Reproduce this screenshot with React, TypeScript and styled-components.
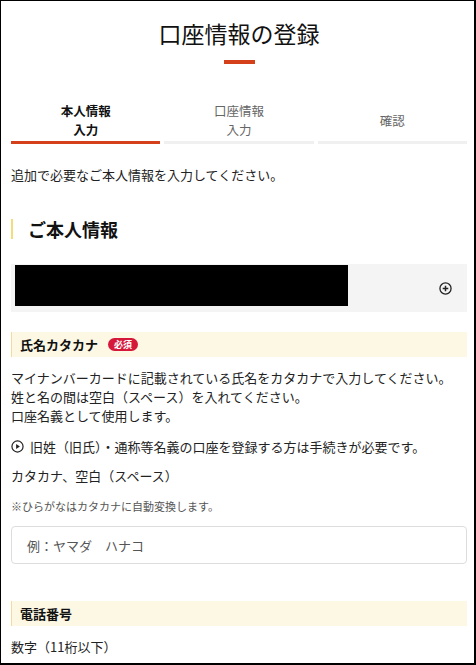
import React from 'react';
import styled, { createGlobalStyle } from 'styled-components';

const GlobalStyle = createGlobalStyle`
    html, body {
        margin: 0;
        padding: 0;
        background: #fff;
    }
    body {
        font-family: "Noto Sans CJK JP", "Noto Sans", sans-serif;
        color: #222;
    }
`;

const steps = [
    { label: ['本人情報', '入力'], active: true },
    { label: ['口座情報', '入力'], active: false },
    { label: ['確認'], active: false },
];

const PlayCircleIcon = () => (
    <svg width="13" height="13" viewBox="0 0 14 14">
        <circle cx="7" cy="7" r="6" fill="none" stroke="#222" strokeWidth="1.3" />
        <path d="M5.5 4.3 L9.6 7 L5.5 9.7 Z" fill="#222" />
    </svg>
);

const PlusCircleIcon = () => (
    <svg width="13" height="13" viewBox="0 0 14 14">
        <circle cx="7" cy="7" r="6" fill="none" stroke="#222" strokeWidth="1.4" />
        <path d="M7 4 V10 M4 7 H10" stroke="#222" strokeWidth="1.6" />
    </svg>
);

const App = () => {
    return (
        <>
            <GlobalStyle />
            <Frame>
                <Title>口座情報の登録</Title>
                <TitleBar />
                <Steps>
                    {steps.map((s) => (
                        <Step key={s.label.join('')} active={s.active}>
                            {s.label.map((l) => (
                                <span key={l}>{l}</span>
                            ))}
                        </Step>
                    ))}
                </Steps>
                <Lead>追加で必要なご本人情報を入力してください。</Lead>
                <SectionTitle>ご本人情報</SectionTitle>
                <InfoPanel>
                    <Redacted />
                    <PlusCircleIcon />
                </InfoPanel>

                <FieldHeader>
                    氏名カタカナ
                    <Required>必須</Required>
                </FieldHeader>
                <Text>
                    マイナンバーカードに記載されている氏名をカタカナで入力してください。
                    <br />
                    姓と名の間は空白（スペース）を入れてください。
                    <br />
                    口座名義として使用します。
                </Text>
                <LinkRow>
                    <PlayCircleIcon />
                    旧姓（旧氏）・通称等名義の口座を登録する方は手続きが必要です。
                </LinkRow>
                <Text>カタカナ、空白（スペース）</Text>
                <Note>※ひらがなはカタカナに自動変換します。</Note>
                <TextInput placeholder="例：ヤマダ　ハナコ" />

                <FieldHeader spaced>電話番号</FieldHeader>
                <Text>数字（11桁以下）</Text>
            </Frame>
        </>
    );
};

const Frame = styled.div`
    box-sizing: border-box;
    width: 476px;
    height: 665px;
    overflow: hidden;
    border: 1px solid #000;
    border-right-width: 2px;
    border-bottom-width: 2px;
    padding: 0 7px 0 10px;
`;

const Title = styled.h1`
    margin: 16px 0 0;
    text-align: center;
    font-size: 23px;
    font-weight: 400;
    line-height: 32px;
    color: #111;
`;

const TitleBar = styled.div`
    width: 31px;
    height: 4px;
    margin: 11px auto 0;
    background: #d4401a;
`;

const Steps = styled.div`
    display: grid;
    grid-template-columns: repeat(3, 1fr);
    gap: 4px;
    margin-top: 35px;
`;

const Step = styled.div<{ active: boolean }>`
    height: 42px;
    display: flex;
    flex-direction: column;
    align-items: center;
    justify-content: center;
    font-size: 12.5px;
    line-height: 19px;
    font-weight: ${(p) => (p.active ? 700 : 400)};
    color: ${(p) => (p.active ? '#111' : '#666')};
    border-bottom: 3px solid ${(p) => (p.active ? '#d4401a' : '#f0f0f0')};
`;

const Lead = styled.p`
    margin: 21px 0 0;
    font-size: 13px;
    line-height: 20px;
    color: #222;
`;

const SectionTitle = styled.h2`
    margin: 34px 0 0;
    padding-left: 15px;
    border-left: 2px solid #f3dc7c;
    font-size: 18px;
    font-weight: 700;
    line-height: 20px;
    color: #111;
`;

const InfoPanel = styled.div`
    margin-top: 25px;
    height: 48px;
    display: flex;
    align-items: flex-start;
    justify-content: space-between;
    padding: 1px 15px 0 4px;
    box-sizing: border-box;
    background: #f4f4f4;

    svg {
        margin-top: 17px;
    }
`;

const Redacted = styled.div`
    width: 333px;
    height: 41px;
    background: #000;
`;

const FieldHeader = styled.div<{ spaced?: boolean }>`
    margin-top: ${(p) => (p.spaced ? '37px' : '20px')};
    height: 25px;
    display: flex;
    align-items: center;
    gap: 10px;
    padding-left: 8px;
    border-left: 1px solid #f0dca0;
    background: #fdf8e4;
    font-size: 13px;
    font-weight: 700;
    color: #111;

    & + p {
        margin-top: 11px;
    }
`;

const Required = styled.span`
    display: inline-flex;
    align-items: center;
    justify-content: center;
    width: 30px;
    height: 13px;
    border-radius: 7px;
    background: #d5183a;
    color: #fff;
    font-size: 9px;
    font-weight: 700;
    line-height: 1;
`;

const Text = styled.p`
    margin: 10px 0 0;
    font-size: 13px;
    line-height: 19px;
    color: #222;
`;

const LinkRow = styled.div`
    margin-top: 12px;
    display: flex;
    align-items: center;
    gap: 6px;
    font-size: 13px;
    line-height: 19px;
    color: #222;
`;

const Note = styled.p`
    margin: 13px 0 0;
    font-size: 11px;
    line-height: 16px;
    color: #555;
`;

const TextInput = styled.input`
    display: block;
    box-sizing: border-box;
    width: 100%;
    height: 38px;
    margin-top: 12px;
    padding: 0 15px;
    border: 1px solid #ddd;
    border-radius: 4px;
    outline: none;
    font-family: inherit;
    font-size: 13px;
    color: #222;

    &::placeholder {
        color: #555;
    }
`;

export default App;
